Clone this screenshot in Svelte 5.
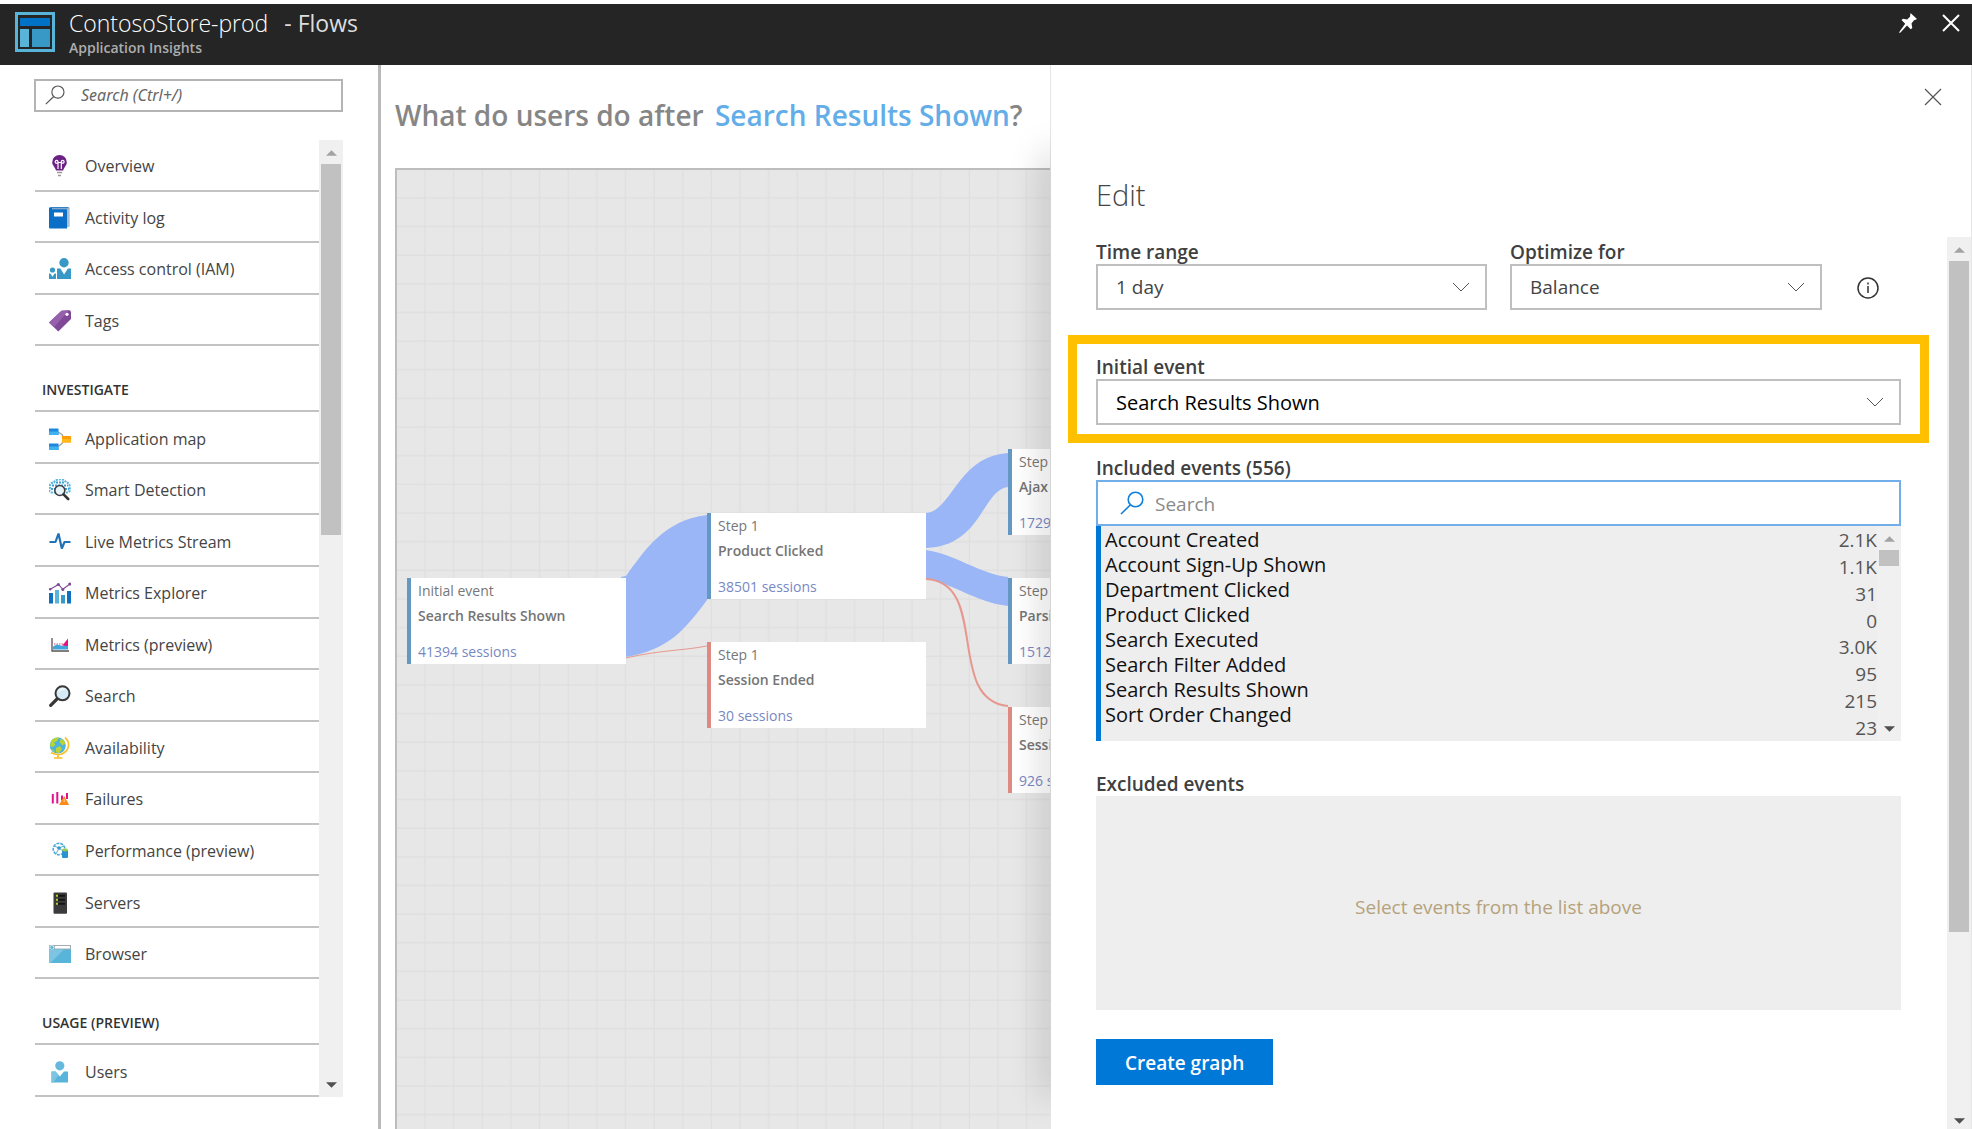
<script>
  const groups = [
    { title: '', items: [['bulb', 'Overview'], ['book', 'Activity log'], ['people', 'Access control (IAM)'], ['tag', 'Tags']] },
    {
      title: 'INVESTIGATE',
      items: [
        ['map', 'Application map'], ['smart', 'Smart Detection'], ['pulse', 'Live Metrics Stream'],
        ['chart', 'Metrics Explorer'], ['area', 'Metrics (preview)'], ['lens', 'Search'],
        ['globe', 'Availability'], ['fail', 'Failures'], ['perf', 'Performance (preview)'],
        ['server', 'Servers'], ['browser', 'Browser']
      ]
    },
    { title: 'USAGE (PREVIEW)', items: [['user', 'Users']] }
  ];

  const nodes = [
    { x: 10, y: 408, step: 'Initial event', name: 'Search Results Shown', sessions: '41394 sessions' },
    { x: 310, y: 343, step: 'Step 1', name: 'Product Clicked', sessions: '38501 sessions' },
    { x: 310, y: 472, step: 'Step 1', name: 'Session Ended', sessions: '30 sessions', ended: true },
    { x: 611, y: 279, step: 'Step', name: 'Ajax', sessions: '1729' },
    { x: 611, y: 408, step: 'Step', name: 'Parsi', sessions: '1512' },
    { x: 611, y: 537, step: 'Step', name: 'Sessi', sessions: '926 s', ended: true }
  ];

  const events = [
    ['Account Created', '2.1K'], ['Account Sign-Up Shown', '1.1K'], ['Department Clicked', '31'],
    ['Product Clicked', '0'], ['Search Executed', '3.0K'], ['Search Filter Added', '95'],
    ['Search Results Shown', '215'], ['Sort Order Changed', '23']
  ];
</script>

{#snippet icon(name)}
  <svg class="icon" viewBox="0 0 22 22" aria-hidden="true">
    {#if name === 'bulb'}
      <path d="M10.500 0a7.300 7.300 0 0 1 7.300 7.200c0 3.300-2.700 4.600-3.600 8.300H7C6.200 11.800 3.200 10.500 3.200 7.200A7.300 7.300 0 0 1 10.500 0z" fill="#6b2284" />
      <path d="M9 14V8.200M12.300 14V8.200M9 8.200H7.800a1.400 1.400 0 1 1 1.200-1.400zM12.300 8.200h1.200a1.400 1.400 0 1 0-1.200-1.400zM9 7.500h3.300" stroke="#fff" stroke-width="1.200" fill="none" />
      <path d="M8 17.600h5.200M9 20.600h3" stroke="#9a9a9a" stroke-width="1.500" />
    {:else if name === 'book'}
      <path d="M1.500 0H20l.7 1v18.500L17 21z" fill="#a9bfd2" />
      <path d="M0 1.800C0 .8.600.3 1.500.3h17.800v1H3v1H18V21.500H1.500C.6 21.500 0 21 0 20z" fill="#0b6fc7" />
      <rect x="5" y="5.500" width="9" height="4" fill="#fff" />
    {:else if name === 'people'}
      <g fill="#3999c6">
        <circle cx="15" cy="4.700" r="4.700" /><path d="M8 10.500h3.400l3.700 6 3.800-6H22V21H8z" />
        <circle cx="3.500" cy="12" r="2.600" /><path d="M0 15.500h1.500l2 3.200 2-3.200H7V21H0z" />
      </g>
    {:else if name === 'tag'}
      <path d="M12.500.800 20 .2a2 2 0 0 1 2 2V9L9.300 21.500 0 12.500z" fill="#804998" />
      <path d="M12.500.800 20 .2 5 17.300 0 12.500z" fill="#9660ad" /><circle cx="18" cy="4.300" r="1.600" fill="#fff" />
    {:else if name === 'map'}
      <path d="M9 4l4 2.500 2 4-2 5-4 3" fill="none" stroke="#a0a0a0" stroke-width="1.300" />
      <path d="M0 .500h9.500V7H0zM0 15.500h9.500V22H0z" fill="#1c87dc" /><path d="M0 3.500h9.500V7H0zM0 18.500h9.500V22H0z" fill="#3fb1f0" />
      <rect x="13" y="8" width="9" height="6.500" fill="#ff9d0a" /><rect x="13" y="11" width="9" height="3.500" fill="#ffb91c" />
    {:else if name === 'smart'}
      <path d="M5 3.500a5 5 0 0 1 5-3 6 6 0 0 1 7 3c3 0 4 3 3.500 5 1 2 .5 4-1.500 5H3C0 13-.5 10.500 1 8.500 0 6 2 3.500 5 3.500z" fill="none" stroke="#5ab4e0" stroke-width="2.200" stroke-dasharray="2 1" />
      <path d="M3 6.500h16M7 3.500h9M2 10h4M16 10h4" stroke="#3f9fd3" stroke-width="2" stroke-dasharray="2 1" />
      <circle cx="10.800" cy="11.500" r="5" fill="#e8f4fa" stroke="#3e3e3e" stroke-width="1.600" /><path d="M14.500 15.300l4.700 4.700" stroke="#333" stroke-width="2.600" stroke-linecap="round" />
    {:else if name === 'pulse'}
      <path d="M.500 11h6l3-8.500L12.800 17.500 15.500 11h6" fill="none" stroke="#2272b9" stroke-width="2.200" stroke-linejoin="bevel" />
    {:else if name === 'chart'}
      <path d="M0 11h4v10.500H0zM18 9h4v12.500h-4z" fill="#0f6fc0" /><path d="M6 8h4v13.500H6z" fill="#59b4d9" /><path d="M12 13h4v8.500h-4z" fill="#3999c6" />
      <path d="M.800 7.500 9.500 2.500l4.300 4.800L21 2" fill="none" stroke="#804998" stroke-width="1.100" />
      <g fill="#804998"><circle cx="1.200" cy="7.200" r="1.300" /><circle cx="9.300" cy="2.500" r="1.600" /><circle cx="13.800" cy="7.500" r="1.500" /><circle cx="20.700" cy="2" r="1.500" /></g>
    {:else if name === 'area'}
      <path d="M3 4v13h17" fill="none" stroke="#555" stroke-width="1.300" /><path d="M4 15.500v-3l4-2 6 1.500 5-3v6.500z" fill="#3fa5dc" />
      <path d="M15 9.500 19 4.500V12l-6-.5z" fill="#e3127e" /><path d="M5 10h9" stroke="#e3406e" stroke-dasharray="1.500 1" />
    {:else if name === 'lens'}
      <path d="M9 13l-7.300 7.300" stroke="#383838" stroke-width="3.200" stroke-linecap="round" /><circle cx="13.500" cy="8.300" r="7" fill="#d5ebf6" stroke="#383838" stroke-width="2" /><path d="M9 7a5 5 0 0 1 8-3z" fill="#eef7fb" />
    {:else if name === 'globe'}
      <circle cx="8.800" cy="8.500" r="8" fill="#4fb2dc" />
      <path d="M2 4a8 8 0 0 1 8-3.400L8 4 5 5.500l1.500 2L4 10 1 9zM12 1.500a8 8 0 0 1 4.500 5l-3 2-3-3.500zM7 11l4-2 2 3-3 4.300-3-1zM2 12l3 1 1 3z" fill="#b8d432" />
      <path d="M16 .5c5 4 4.500 11 0 14.500-3.500 3-9 3.500-14 .5M9 17.500v3M5 21h8.500" fill="none" stroke="#fbbf26" stroke-width="1.700" />
    {:else if name === 'fail'}
      <path d="M3.800 6v9.500M8.300 4v11.500M13 7.500v5M18 5v6" stroke="#e3128b" stroke-width="2" /><path d="M15.200 8l5 9H10z" fill="#ff8c1a" /><path d="M15.200 11v3" stroke="#ffd596" />
    {:else if name === 'perf'}
      <circle cx="10" cy="9" r="5.800" fill="none" stroke="#4aa8dc" stroke-width="1.600" stroke-dasharray="3 1" /><path d="M5 6l5 2 5-2M10 8l-3 6M10 8l4 3" stroke="#57b1dd" fill="none" /><circle cx="10" cy="8" r="1.800" fill="#3999c6" />
      <rect x="13" y="10" width="6" height="8" rx="1" fill="#2b93cf" /><ellipse cx="16" cy="10" rx="3" ry="1.400" fill="#9bc94f" />
    {:else if name === 'server'}
      <rect x="4.500" y=".500" width="13.500" height="21.300" rx="1" fill="#3b3b3b" /><path d="M7 3.800h9M7 7.800h9M7 11.800h9" stroke="#151515" stroke-width="2" /><path d="M7 3.800h2M7 7.800h2M7 11.800h2" stroke="#b8d432" stroke-width="2" />
    {:else if name === 'browser'}
      <rect y="2" width="22" height="18" fill="#59b4d9" /><path d="M0 2h22v4.500H0z" fill="#a3adb3" /><path d="M6 3h15v2.500H6z" fill="#fff" /><circle cx="2.800" cy="4.500" r="2" fill="#59b4d9" stroke="#e6f4fa" stroke-width=".800" /><path d="M0 6.500h15L1.500 20H0z" fill="#7cc4e2" />
    {:else if name === 'user'}
      <circle cx="10.800" cy="4.800" r="4.600" fill="#66b9dc" /><path d="M2.500 10.500h4l4.300 5 4.200-5h4V21.500H2.500z" fill="#59b4d9" /><path d="M2.500 10.500h4l3 3.500-5 7.500h-2z" fill="#7cc4e2" />
    {/if}
  </svg>
{/snippet}

{#snippet cross()}
  <svg class="cross" viewBox="0 0 18 18" aria-hidden="true"><path d="M1 1l16 16M17 1L1 17" /></svg>
{/snippet}

{#snippet magnifier()}
  <svg class="magnifier" viewBox="0 0 24 24" aria-hidden="true"><circle cx="15.500" cy="8.500" r="7.300" /><path d="M10.500 13.800L1 23" /></svg>
{/snippet}

{#snippet scrollbar(kind)}
  <div class="scrollbar {kind}" aria-hidden="true">
    <svg viewBox="0 0 12 6"><path d="M0 6l6-6 6 6z" fill="#a3a3a3" /></svg>
    <span class="thumb"></span>
    <svg viewBox="0 0 12 6"><path d="M0 0l6 6 6-6z" fill="#505050" /></svg>
  </div>
{/snippet}

{#snippet dropdown(id, label, value)}
  <div class="field">
    <label for={id}>{label}</label>
    <div class="drop">
      <select {id}><option>{value}</option></select>
      <svg viewBox="0 0 18 10" aria-hidden="true"><path d="M1 1l8 8 8-8" /></svg>
    </div>
  </div>
{/snippet}

<div class="page">
  <header>
    <svg class="logo" viewBox="0 0 40 40" aria-hidden="true">
      <rect x="1.500" y="1.500" width="37" height="37" fill="none" stroke="#59b4d9" stroke-width="3" />
      <rect x="5" y="6" width="30" height="8" fill="#0072c6" />
      <rect x="5" y="17" width="9" height="18" fill="#59b4d9" /><rect x="17" y="17" width="18" height="18" fill="#3999c6" />
    </svg>
    <div class="titles">
      <h1><span>ContosoStore-prod</span><span class="blade">- Flows</span></h1>
      <p>Application Insights</p>
    </div>
    <div class="actions">
      <button aria-label="Pin">
        <svg class="pin" viewBox="0 0 18 20"><path d="M11.500 0L18 6l-2 1-1 .3-2.500 3.200.8 4.500-1.600 1.300L8 12.500 1.500 19.500 0 20l.8-1.700 5.400-7.500L2.500 7 4 5.800l4.200.8L11 3.700z" fill="#fff" /></svg>
      </button>
      <button aria-label="Close">{@render cross()}</button>
    </div>
  </header>

  <div class="body">
    <aside>
      <label class="filter">{@render magnifier()}<input type="text" aria-label="Search menu" placeholder="Search (Ctrl+/)" /></label>
      <div class="menu">
        <nav>
          {#each groups as group}
            {#if group.title}<h2>{group.title}</h2>{/if}
            {#each group.items as [glyph, label]}
              <a href="#{glyph}">{@render icon(glyph)}{label}</a>
            {/each}
          {/each}
        </nav>
        {@render scrollbar('side')}
      </div>
    </aside>

    <main>
      <h2 class="question">What do users do after <a href="#event">Search Results Shown</a>?</h2>
      <div class="canvas">
        <svg class="links" aria-hidden="true">
          <defs>
            <pattern id="grid" width="20" height="20" patternUnits="userSpaceOnUse" patternTransform="scale(1.4325)">
              <path d="M20 0v20H0" fill="none" stroke="#dfdfdf" stroke-width="2" />
            </pattern>
          </defs>
          <rect width="100%" height="100%" fill="url(#grid)" />
          <g fill="#9ab6f6">
            <path d="M224 407l5-1C248 380 267 350 310 345V430C288 460 271 480 229 487z" />
            <path d="M529 343C555 341 561 286 611 283V317C585 320 585 376 529 378z" />
            <path d="M529 380C558 384 583 404 611 407V436C578 432 558 414 529 409z" />
          </g>
          <g fill="none" stroke="#e6988f">
            <path d="M229 488C263 480 283 481 310 476" />
            <path d="M529 409C593 412 548 530 611 536" stroke-width="2" />
          </g>
        </svg>
        {#each nodes as node}
          <div class="node" class:ended={node.ended} style="left:{node.x}px;top:{node.y}px">
            <span>{node.step}</span>
            <strong>{node.name}</strong>
            <a href="#sessions">{node.sessions}</a>
          </div>
        {/each}
      </div>
    </main>

    <section class="panel">
      <div class="panel-top"><button aria-label="Close editor">{@render cross()}</button></div>
      <h2 class="edit">Edit</h2>
      <div class="scroller">
        <form>
          <div class="row">
            {@render dropdown('range', 'Time range', '1 day')}
            {@render dropdown('optimize', 'Optimize for', 'Balance')}
            <svg class="info" viewBox="0 0 24 24" role="img" aria-label="Information"><circle cx="12" cy="12" r="10" /><path d="M12 10v7M12 6.500v2" /></svg>
          </div>
          <div class="highlight">{@render dropdown('initial', 'Initial event', 'Search Results Shown')}</div>
          <div class="field included">
            <label for="included">Included events (556)</label>
            <div class="search">{@render magnifier()}<input id="included" type="text" placeholder="Search" /></div>
            <div class="events">
              <ul class="names">{#each events as [name]}<li>{name}</li>{/each}</ul>
              <ul class="counts">{#each events as [, count]}<li>{count}</li>{/each}</ul>
              {@render scrollbar('inner')}
            </div>
          </div>
          <div class="field">
            <h3>Excluded events</h3>
            <div class="excluded">Select events from the list above</div>
          </div>
          <button class="create" type="button">Create graph</button>
        </form>
        {@render scrollbar('outer')}
      </div>
    </section>
  </div>
</div>

<style>
  :global(body) { background: #fff; }
  * { box-sizing: border-box; }
  h1, h2, h3, p, ul { margin: 0; padding: 0; font-weight: inherit; }
  ul { list-style: none; }
  a { text-decoration: none; color: inherit; }
  button { border: 0; padding: 0; background: none; font: inherit; }
  input, select { font: inherit; border: 0; outline: 0; background: none; padding: 0; min-width: 0; }
  svg { display: block; flex: none; }

  .page { height: 100vh; padding-top: 4px; display: flex; flex-direction: column; overflow: hidden; font-family: "Open Sans", "Noto Sans", sans-serif; color: #444; }
  header { display: flex; align-items: flex-start; height: 61px; padding: 0 12px 0 15px; background: #252525; color: #fff; flex: none; }
  .logo { width: 40px; height: 40px; margin-top: 8px; }
  .titles { margin-left: 14px; flex: 1; }
  h1 { display: flex; gap: 16px; font-size: 23px; line-height: 32px; padding-top: 3px; font-weight: 300; }
  .blade { font-weight: 400; color: #ddd; }
  header p { font-size: 14px; line-height: 18px; font-weight: 600; color: #adadad; }
  .actions { display: flex; gap: 25px; padding-top: 9px; align-items: center; }
  .pin { width: 18px; height: 20px; }
  .cross { width: 18px; height: 18px; fill: none; stroke: #555; stroke-width: 1.200; }
  .actions .cross { stroke: #fff; stroke-width: 2; }

  .body { flex: 1; display: flex; min-height: 0; }
  aside { flex: 0 0 381px; border-right: 3px solid #bababa; padding: 14px 35px 32px 34px; display: flex; flex-direction: column; }
  .filter { display: flex; align-items: center; height: 33px; border: 2px solid #b4b4b4; padding: 0 9px 2px; gap: 16px; flex: none; }
  .magnifier { width: 20px; height: 20px; fill: none; stroke: #555; stroke-width: 1.400; }
  .filter input { flex: 1; font-family: "Noto Sans", sans-serif; font-size: 16px; font-style: italic; }
  .filter input::placeholder { color: #666; opacity: 1; }
  .menu { flex: 1; margin-top: 28px; display: flex; min-height: 0; }
  nav { flex: 1; display: flex; flex-direction: column; padding-left: 1px; }
  nav a { flex: 1; display: flex; align-items: center; gap: 14px; padding: 3px 0 0 14px; border-bottom: 2px solid #c3c3c3; font-size: 16px; color: #444; }
  nav h2 { height: 66px; flex: none; padding: 34px 0 0 7px; border-bottom: 2px solid #c3c3c3; font-size: 14px; line-height: 20px; font-weight: 600; color: #333; }
  .icon { width: 22px; height: 22px; }

  .scrollbar { flex: 0 0 24px; display: flex; flex-direction: column; align-items: center; background: #f0f0f0; padding: 10px 0 9px; }
  .scrollbar svg { width: 11px; height: 6px; }
  .thumb { width: 20px; background: #c1c1c1; }
  .scrollbar svg:last-child { margin-top: auto; }
  .side .thumb { height: 39.5%; margin-top: 8px; }
  .inner .thumb { height: 16px; margin-top: 8px; }
  .outer .thumb { height: 76.5%; margin-top: 8px; }
  .outer { padding-bottom: 5px; }

  main { flex: 655 1 0; min-width: 0; display: flex; flex-direction: column; overflow: hidden; padding-left: 14px; }
  .question { height: 103px; flex: none; padding-top: 30px; font-size: 28px; line-height: 40px; font-weight: 600; color: #868686; white-space: nowrap; }
  .question a { color: #63ade9; margin-left: 4px; }
  .canvas { flex: 1; position: relative; overflow: hidden; border: solid #bdbdbd; border-width: 2px 0 0 2px; background: #e7e7e7; }
  .links { width: 100%; height: 100%; }
  .node { position: absolute; width: 219px; height: 86px; background: #fff; border-left: 4px solid #6498c2; padding: 3px 0 0 7px; display: flex; flex-direction: column; white-space: nowrap; font-size: 14px; line-height: 20px; color: #777; }
  .node.ended { border-left-color: #de8a82; }
  .node strong { font-weight: 600; margin-top: 5px; color: #757575; }
  .node a { color: #7888c4; margin-top: 16px; }

  .panel { flex: 920 1 0; min-width: 0; position: relative; display: flex; flex-direction: column; background: #fff; border: solid #e6e6e6; border-width: 0 1px; }
  .panel::before { content: ""; position: absolute; inset: 90px auto 36px 0; width: 1px; box-shadow: 0 0 32px 4px rgb(0 0 0 / 36%); clip-path: inset(-80px 1px -60px -60px); }
  .panel-top { display: flex; justify-content: flex-end; padding: 23px 29px 0 0; height: 110px; }
  .panel-top button { height: 18px; }
  .edit { padding-left: 45px; height: 62px; font-size: 29px; line-height: 40px; font-weight: 300; }
  .scroller { flex: 1; display: flex; min-height: 0; }
  form { flex: 1; min-width: 0; padding: 0 18px 0 17px; font-size: 19px; }
  .row { display: flex; align-items: flex-end; padding-left: 28px; }
  .row .field:nth-child(1) { flex: 391 1 0; margin-right: 23px; }
  .row .field:nth-child(2) { flex: 312 1 0; margin-right: 34px; }
  .info { width: 24px; height: 24px; margin: 0 49px 10px 0; fill: none; stroke: #333; stroke-width: 1.500; }
  label:not(.filter), h3 { display: block; padding-top: 3px; font-weight: 600; font-size: 19px; line-height: 24px; color: #404040; }
  .drop { display: flex; position: relative; height: 46px; border: 2px solid #bfbfbf; }
  .drop select { flex: 1; appearance: none; padding-left: 18px; color: #444; }
  .drop svg { position: absolute; right: 15px; top: 16px; width: 18px; height: 10px; fill: none; stroke: #555; pointer-events: none; }
  .highlight { margin-top: 25px; border: 9px solid #ffc000; padding: 8px 19px 9px; }
  .highlight select { color: #000; font-size: 20px; }
  .field { min-width: 0; }
  form > .field { margin: 10px 28px 0; }
  .search { display: flex; align-items: center; height: 46px; border: 2px solid #72aee8; padding-left: 22px; gap: 11px; }
  .search .magnifier { width: 24px; height: 24px; stroke: #0f7fdc; stroke-width: 1.600; }
  .search input { flex: 1; padding-top: 2px; }
  .search input::placeholder { color: #8a8a8a; opacity: 1; }
  .events { display: flex; height: 215px; background: #eee; border-left: 5px solid #0078d7; }
  .names { flex: 1; padding: 1px 0 0 4px; color: #111; font-size: 20px; line-height: 25px; }
  .counts { display: flex; flex-direction: column; text-align: right; padding-top: 1px; color: #555; }
  .counts li { flex: 1; display: flex; align-items: center; justify-content: flex-end; }
  form > .field:nth-last-child(2) { margin-top: 28px; }
  .excluded { height: 214px; display: flex; align-items: center; justify-content: center; padding-top: 8px; background: #eee; color: #b5a27c; }
  .create { display: block; margin: 29px 28px 0; height: 46px; padding: 2px 29px 0; background: #0078d7; color: #fff; font-weight: 600; }
</style>
